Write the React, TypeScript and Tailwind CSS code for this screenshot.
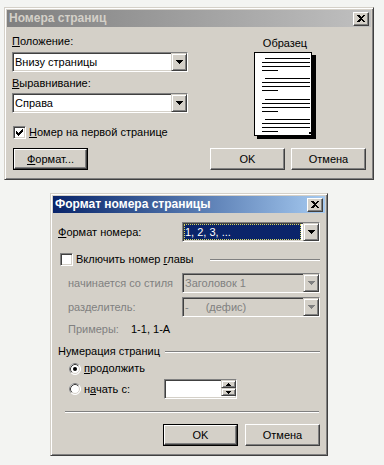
import React from "react";

const FONT = "font-['Liberation_Sans',Arial,sans-serif]";

const windowFrame =
  "border border-t-[#d4d0c8] border-l-[#d4d0c8] border-r-[#404040] border-b-[#404040] shadow-[inset_1px_1px_0_#fff,inset_-1px_-1px_0_#808080]";
const raised =
  "border border-t-white border-l-white border-r-[#404040] border-b-[#404040] shadow-[inset_-1px_-1px_0_#808080]";
const sunken =
  "border border-t-[#808080] border-l-[#808080] border-r-white border-b-white shadow-[inset_1px_1px_0_#404040,inset_-1px_-1px_0_#d4d0c8]";

function CloseBox() {
  return (
    <div className={`flex h-[14px] w-[16px] items-center justify-center bg-[#d4d0c8] ${raised}`}>
      <svg width="8" height="7" viewBox="0 0 8 7" shapeRendering="crispEdges">
        <path d="M0 0h2l2 2 2-2h2L5 3.5 8 7H6L4 5 2 7H0l3-3.5z" fill="#000" />
      </svg>
    </div>
  );
}

function TitleBar({ title, active }: { title: string; active?: boolean }) {
  return (
    <div
      className={`flex h-[17px] items-center justify-between pl-[2px] pr-[2px] text-[12px] font-bold ${
        active
          ? "bg-linear-to-r from-[#0a246a] to-[#a6caf0] text-white"
          : "bg-linear-to-r from-[#808080] to-[#c0c0c0] text-[#d4d0c8]"
      }`}
    >
      <span>{title}</span>
      <CloseBox />
    </div>
  );
}

function Button({ children, def }: { children: React.ReactNode; def?: boolean }) {
  return (
    <div className={`h-[22px] w-[75px] ${def ? "border border-black" : ""}`}>
      <div className={`flex h-full w-full items-center justify-center bg-[#d4d0c8] ${raised}`}>{children}</div>
    </div>
  );
}

function Arrow({ disabled }: { disabled?: boolean }) {
  return (
    <div className={`flex h-full w-[16px] shrink-0 items-center justify-center bg-[#d4d0c8] ${windowFrame}`}>
      <svg width="7" height="4" viewBox="0 0 7 4" shapeRendering="crispEdges">
        <path d="M0 0h7v1H6v1H5v1H4v1H3V3H2V2H1V1H0z" fill={disabled ? "#808080" : "#000"} />
      </svg>
    </div>
  );
}

function Select({
  children,
  className = "",
  disabled,
  selected,
}: {
  children: React.ReactNode;
  className?: string;
  disabled?: boolean;
  selected?: boolean;
}) {
  return (
    <div className={`flex h-[20px] shrink-0 ${sunken} ${disabled ? "bg-[#d4d0c8] text-[#808080]" : "bg-white"} ${className}`}>
      {selected ? (
        <div className="m-[1px] mr-[2px] flex flex-1 items-center bg-[#0a246a] pl-[1px] text-white outline-1 -outline-offset-1 outline-dotted outline-[#d8d860]">
          {children}
        </div>
      ) : (
        <div className="flex flex-1 items-center pl-[2px]">{children}</div>
      )}
      <Arrow disabled={disabled} />
    </div>
  );
}

function Check({ checked }: { checked?: boolean }) {
  return (
    <div className={`flex h-[13px] w-[13px] shrink-0 items-center justify-center bg-white ${sunken}`}>
      {checked && (
        <svg width="7" height="7" viewBox="0 0 7 7" shapeRendering="crispEdges">
          <path d="M6 0h1v3H6v1H5v1H4v1H3v1H2V6H1V5H0V2h1v1h1v1h1V3h1V2h1V1h1z" fill="#000" />
        </svg>
      )}
    </div>
  );
}

function Radio({ on }: { on?: boolean }) {
  return (
    <svg width="12" height="12" viewBox="0 0 12 12" className="shrink-0">
      <circle cx="6" cy="6" r="5.5" fill="#fff" stroke="#fff" />
      <path d="M2.11 9.89A5.5 5.5 0 0 1 9.89 2.11" fill="none" stroke="#808080" />
      <circle cx="6" cy="6" r="4.5" fill="#fff" stroke="#d4d0c8" />
      <path d="M2.82 9.18A4.5 4.5 0 0 1 9.18 2.82" fill="none" stroke="#404040" />
      {on && <circle cx="6" cy="6" r="2" fill="#000" />}
    </svg>
  );
}

function Etched({ className = "" }: { className?: string }) {
  return <div className={`h-[2px] border-t border-b border-t-[#808080] border-b-white ${className}`} />;
}

function PagePreview() {
  const paras = [6, 26, 47, 67];
  return (
    <svg width="62" height="87" viewBox="0 0 62 87" shapeRendering="crispEdges" className="mt-[2px]">
      <rect x="3" y="3" width="59" height="84" fill="#000" />
      <rect x="0" y="0" width="58" height="84" fill="#000" />
      <rect x="1" y="1" width="56" height="82" fill="#fff" />
      {paras.map((y) => (
        <g key={y} fill="#000">
          <rect x="11" y={y} width="45" height="1" />
          <rect x="8" y={y + 4} width="48" height="1" />
          <rect x="8" y={y + 8} width="48" height="1" />
          <rect x="8" y={y + 12} width="16" height="1" />
        </g>
      ))}
      <rect x="55" y="80" width="2" height="2" fill="#000" />
    </svg>
  );
}

function PageNumbersDialog() {
  return (
    <div className={`ml-[4px] flex h-[173px] w-[370px] flex-col bg-[#d4d0c8] p-[2px] ${windowFrame}`}>
      <TitleBar title="Номера страниц" />
      <div className="flex flex-col px-[5px]">
        <div className="flex">
          <div className="flex w-[176px] flex-col">
            <div className="mt-[8px]">
              <u>П</u>оложение:
            </div>
            <Select className="mt-[4px] w-[176px]">Внизу страницы</Select>
            <div className="mt-[5px]">
              <u>В</u>ыравнивание:
            </div>
            <Select className="mt-[3px] w-[176px]">Справа</Select>
            <div className="ml-[1px] mt-[13px] flex items-center gap-[3px]">
              <Check checked />
              <span>
                <u>Н</u>омер на первой странице
              </span>
            </div>
          </div>
          <div className="ml-[66px] flex w-[62px] flex-col items-center">
            <div className="mt-[10px] whitespace-nowrap">Образец</div>
            <PagePreview />
          </div>
        </div>
        <div className="mt-[9px] flex items-center">
          <div className="ml-[1px]">
            <Button def>
              <span>
                <u>Ф</u>ормат...
              </span>
            </Button>
          </div>
          <div className="ml-auto flex gap-[6px]">
            <Button>OK</Button>
            <Button>Отмена</Button>
          </div>
        </div>
      </div>
    </div>
  );
}

function FormatDialog() {
  return (
    <div className={`ml-[50px] mt-[13px] flex h-[263px] w-[278px] flex-col bg-[#d4d0c8] p-[2px] ${windowFrame}`}>
      <TitleBar title="Формат номера страницы" active />
      <div className="flex flex-col px-[5px]">
        <div className="mt-[9px] flex h-[20px] items-center">
          <span>
            <u>Ф</u>ормат номера:
          </span>
          <Select selected className="ml-auto w-[138px]">
            1, 2, 3, ...
          </Select>
        </div>

        <div className="mt-[11px] flex h-[13px] items-center">
          <div className="ml-[2px]">
            <Check />
          </div>
          <span className="ml-[3px] whitespace-nowrap">
            Включить номер <u>г</u>лавы
          </span>
          <Etched className="ml-auto w-[110px]" />
        </div>

        <div className="mt-[7px] flex h-[20px] items-center text-[#808080]">
          <span className="pl-[10px]">начинается со стиля</span>
          <Select disabled className="ml-auto w-[138px]">
            Заголовок 1
          </Select>
        </div>

        <div className="mt-[4px] flex h-[20px] items-center text-[#808080]">
          <span className="pl-[10px]">разделитель:</span>
          <Select disabled className="ml-auto w-[138px]">
            <span>-</span>
            <span className="ml-[17px]">(дефис)</span>
          </Select>
        </div>

        <div className="mt-[6px] flex h-[13px] items-center">
          <span className="w-[73px] pl-[10px] text-[#808080]">Примеры:</span>
          <span>1-1, 1-А</span>
        </div>

        <div className="mt-[9px] flex h-[13px] items-center">
          <span className="whitespace-nowrap">Нумерация страниц</span>
          <Etched className="ml-[5px] flex-1" />
        </div>

        <div className="mt-[4px] flex h-[13px] items-center">
          <div className="ml-[11px] flex items-center gap-[3px]">
            <Radio on />
            <span>
              <u>п</u>родолжить
            </span>
          </div>
        </div>

        <div className="mt-[4px] flex h-[20px] items-center">
          <div className="ml-[11px] flex w-[95px] items-center gap-[3px]">
            <Radio />
            <span>
              н<u>а</u>чать с:
            </span>
          </div>
          <div className={`flex h-[20px] w-[73px] bg-white ${sunken}`}>
            <div className="flex-1" />
            <div className="flex w-[15px] flex-col">
              <div className={`flex h-[8px] items-center justify-center bg-[#d4d0c8] ${windowFrame}`}>
                <svg width="5" height="3" viewBox="0 0 5 3" shapeRendering="crispEdges">
                  <path d="M2 0h1v1h1v1h1v1H0V2h1V1h1z" fill="#000" />
                </svg>
              </div>
              <div className={`flex h-[8px] items-center justify-center bg-[#d4d0c8] ${windowFrame}`}>
                <svg width="5" height="3" viewBox="0 0 5 3" shapeRendering="crispEdges">
                  <path d="M0 0h5v1H4v1H3v1H2V2H1V1H0z" fill="#000" />
                </svg>
              </div>
            </div>
          </div>
        </div>

        <Etched className="ml-[7px] mr-[1px] mt-[12px]" />

        <div className="mt-[11px] flex justify-end gap-[7px]">
          <Button def>OK</Button>
          <Button>Отмена</Button>
        </div>
      </div>
    </div>
  );
}

export default function App() {
  return (
    <div className={`${FONT} flex min-h-[465px] w-[384px] flex-col items-start bg-[#f3f4f2] pt-[7px] text-[11px] leading-[13px] text-black`}>
      <PageNumbersDialog />
      <FormatDialog />
    </div>
  );
}
